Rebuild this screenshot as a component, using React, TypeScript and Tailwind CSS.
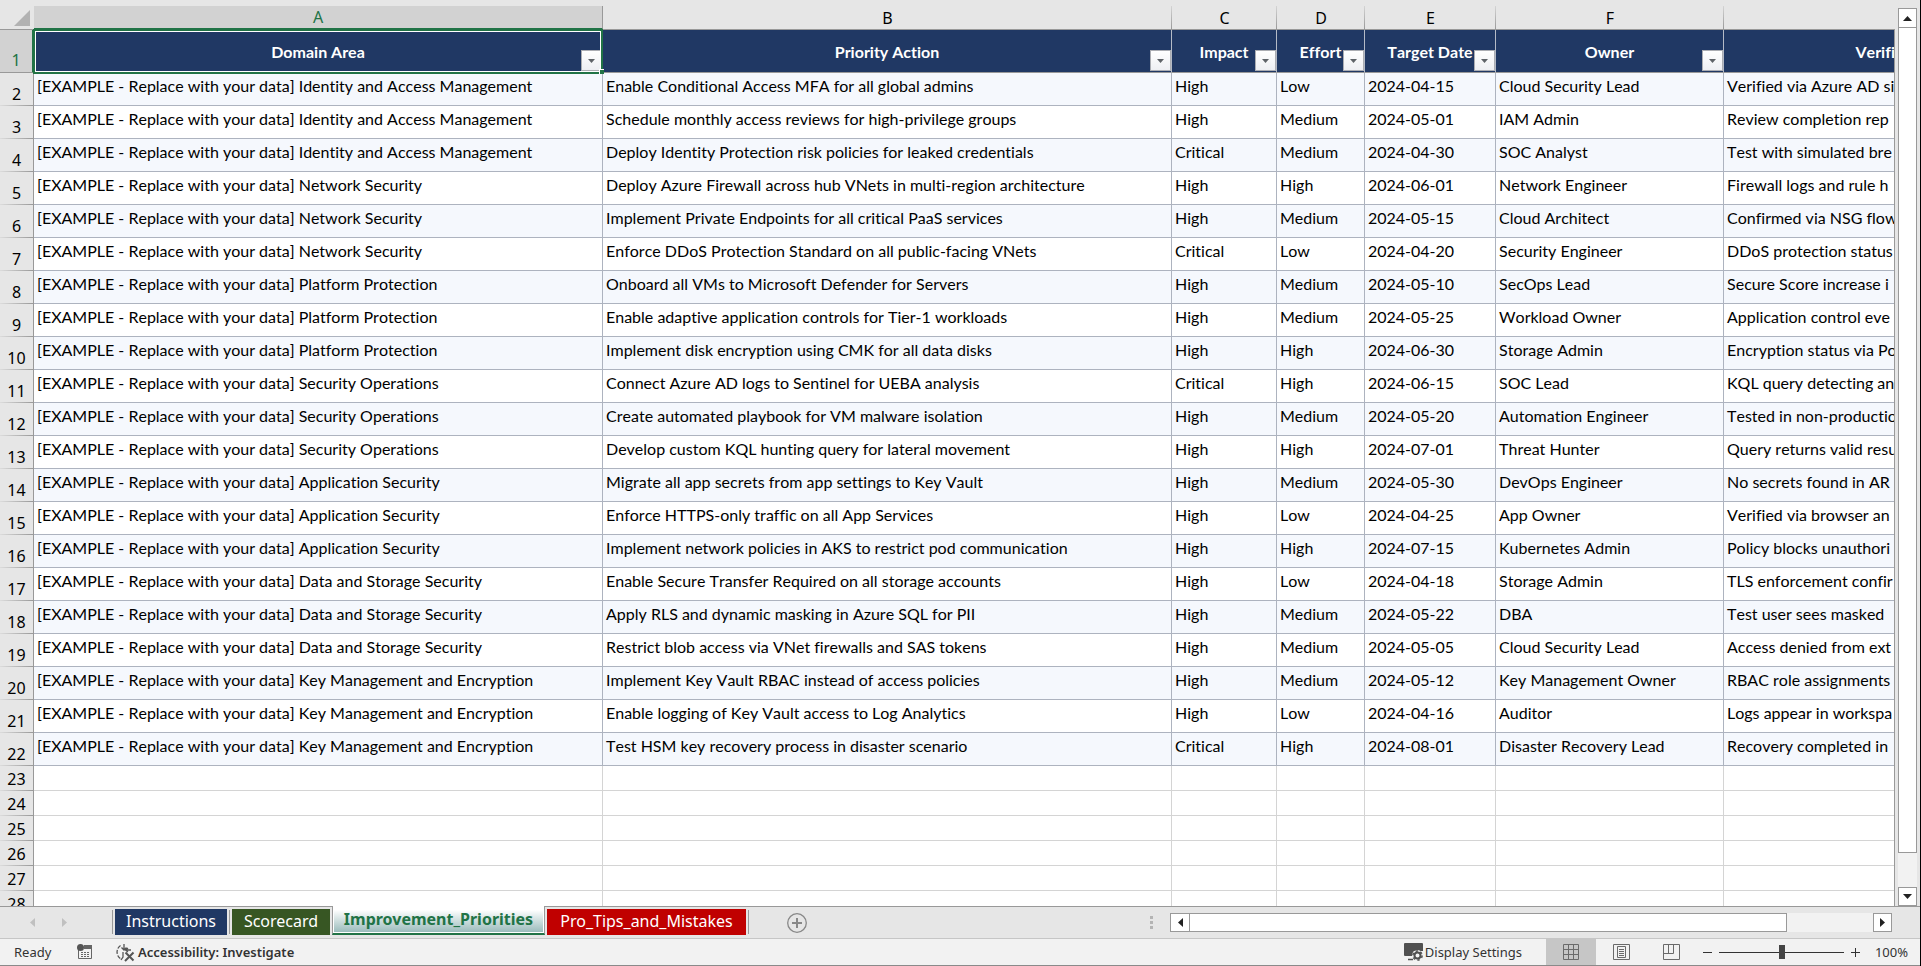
import React from "react";

type Row = [string, string, string, string, string, string, string];

const PREFIX = "[EXAMPLE - Replace with your data] ";

const columns = ["Domain Area", "Priority Action", "Impact", "Effort", "Target Date", "Owner"];
const letters = ["A", "B", "C", "D", "E", "F", ""];

const rows: Row[] = [
  ["Identity and Access Management", "Enable Conditional Access MFA for all global admins", "High", "Low", "2024-04-15", "Cloud Security Lead", "Verified via Azure AD si"],
  ["Identity and Access Management", "Schedule monthly access reviews for high-privilege groups", "High", "Medium", "2024-05-01", "IAM Admin", "Review completion rep"],
  ["Identity and Access Management", "Deploy Identity Protection risk policies for leaked credentials", "Critical", "Medium", "2024-04-30", "SOC Analyst", "Test with simulated bre"],
  ["Network Security", "Deploy Azure Firewall across hub VNets in multi-region architecture", "High", "High", "2024-06-01", "Network Engineer", "Firewall logs and rule h"],
  ["Network Security", "Implement Private Endpoints for all critical PaaS services", "High", "Medium", "2024-05-15", "Cloud Architect", "Confirmed via NSG flow"],
  ["Network Security", "Enforce DDoS Protection Standard on all public-facing VNets", "Critical", "Low", "2024-04-20", "Security Engineer", "DDoS protection status"],
  ["Platform Protection", "Onboard all VMs to Microsoft Defender for Servers", "High", "Medium", "2024-05-10", "SecOps Lead", "Secure Score increase i"],
  ["Platform Protection", "Enable adaptive application controls for Tier-1 workloads", "High", "Medium", "2024-05-25", "Workload Owner", "Application control eve"],
  ["Platform Protection", "Implement disk encryption using CMK for all data disks", "High", "High", "2024-06-30", "Storage Admin", "Encryption status via Po"],
  ["Security Operations", "Connect Azure AD logs to Sentinel for UEBA analysis", "Critical", "High", "2024-06-15", "SOC Lead", "KQL query detecting an"],
  ["Security Operations", "Create automated playbook for VM malware isolation", "High", "Medium", "2024-05-20", "Automation Engineer", "Tested in non-productio"],
  ["Security Operations", "Develop custom KQL hunting query for lateral movement", "High", "High", "2024-07-01", "Threat Hunter", "Query returns valid resu"],
  ["Application Security", "Migrate all app secrets from app settings to Key Vault", "High", "Medium", "2024-05-30", "DevOps Engineer", "No secrets found in AR"],
  ["Application Security", "Enforce HTTPS-only traffic on all App Services", "High", "Low", "2024-04-25", "App Owner", "Verified via browser an"],
  ["Application Security", "Implement network policies in AKS to restrict pod communication", "High", "High", "2024-07-15", "Kubernetes Admin", "Policy blocks unauthori"],
  ["Data and Storage Security", "Enable Secure Transfer Required on all storage accounts", "High", "Low", "2024-04-18", "Storage Admin", "TLS enforcement confir"],
  ["Data and Storage Security", "Apply RLS and dynamic masking in Azure SQL for PII", "High", "Medium", "2024-05-22", "DBA", "Test user sees masked"],
  ["Data and Storage Security", "Restrict blob access via VNet firewalls and SAS tokens", "High", "Medium", "2024-05-05", "Cloud Security Lead", "Access denied from ext"],
  ["Key Management and Encryption", "Implement Key Vault RBAC instead of access policies", "High", "Medium", "2024-05-12", "Key Management Owner", "RBAC role assignments"],
  ["Key Management and Encryption", "Enable logging of Key Vault access to Log Analytics", "High", "Low", "2024-04-16", "Auditor", "Logs appear in workspa"],
  ["Key Management and Encryption", "Test HSM key recovery process in disaster scenario", "Critical", "High", "2024-08-01", "Disaster Recovery Lead", "Recovery completed in"],
];

const emptyRows = [23, 24, 25, 26, 27, 28];

const FilterButton = ({ name }: { name: string }) => (
  <button
    aria-label={`Filter ${name}`}
    className="absolute right-0 bottom-px flex h-[21px] w-[21px] items-center justify-center border border-[#abadb3] bg-gradient-to-b from-white to-[#eeeff3]"
  >
    <svg className="h-1 w-[7px]" viewBox="0 0 7 4" fill="#5f6368">
      <path d="M0 0h7L3.5 4z" />
    </svg>
  </button>
);

const RowNumber = ({ n, active = false }: { n: number; active?: boolean }) => (
  <th
    scope="row"
    className={
      active
        ? "border-r-2 border-b border-r-[#217346] border-b-[#999] bg-[#d2d2d2] p-0 pb-0.5 align-bottom font-['Noto_Sans'] text-base leading-5 font-normal text-[#217346]"
        : "border-r border-[#999] bg-[#e6e6e6] bg-[linear-gradient(to_right,#dcdcdc,#999)] bg-[length:100%_1px] bg-bottom bg-no-repeat p-0 pb-0.5 align-bottom font-['Noto_Sans'] text-base leading-5 font-normal"
    }
  >
    {n}
  </th>
);

const Sheet = () => (
  <div className="relative min-w-0 flex-1 overflow-hidden bg-[#e6e6e6] pt-1.5 after:absolute after:top-[30px] after:right-0 after:bottom-0 after:w-px after:bg-[#999] after:content-['']">
    <table className="w-full table-fixed border-separate border-spacing-0 bg-white">
      <colgroup>
        <col className="w-[34px]" />
        <col className="w-[569px]" />
        <col className="w-[569px]" />
        <col className="w-[105px]" />
        <col className="w-[88px]" />
        <col className="w-[131px]" />
        <col className="w-[228px]" />
        <col />
      </colgroup>
      <thead>
        <tr className="h-6">
          <td className="border-b border-[#999] bg-[#e6e6e6] p-0">
            <button aria-label="Select all" className="block w-full pl-[14px]">
              <svg className="h-4 w-4" viewBox="0 0 16 16" fill="#b2b2b2">
                <path d="M16 0v16H0z" />
              </svg>
            </button>
          </td>
          {letters.map((letter, i) => (
            <th
              key={letter}
              scope="col"
              className={
                i === 0
                  ? "border-r border-b-2 border-r-[#999] border-b-[#217346] bg-[#d2d2d2] p-0 font-['Noto_Sans'] text-base leading-5 font-normal text-[#217346]"
                  : "border-b border-[#999] bg-[#e6e6e6] bg-[linear-gradient(to_bottom,#d4d4d4,#999)] bg-[length:1px_100%] bg-right bg-no-repeat p-0 font-['Noto_Sans'] text-base leading-5 font-normal last:bg-none"
              }
            >
              {letter}
            </th>
          ))}
        </tr>
        <tr className="h-[43px]">
          <RowNumber n={1} active />
          {columns.map((name, i) => (
            <th
              key={name}
              scope="col"
              className="relative border-r border-b border-r-[#b4bac6] border-b-[#999] bg-[#203864] p-0 pt-0.5 text-center leading-5 font-bold whitespace-nowrap text-white"
            >
              {name}
              <FilterButton name={name} />
              {i === 0 && (
                <span className="pointer-events-none absolute -inset-x-px -top-px -bottom-[2px] z-10 border-2 border-[#217346]">
                  <span className="absolute inset-0 border border-white" />
                  <span className="absolute -right-[3px] -bottom-[2px] h-[5px] w-[5px] border-t border-l border-white bg-[#217346]" />
                </span>
              )}
            </th>
          ))}
          <th
            scope="col"
            className="border-b border-[#999] bg-[#203864] p-0 pt-0.5 text-right leading-5 font-bold text-white"
          >
            Verifi
          </th>
        </tr>
      </thead>
      <tbody>
        {rows.map((row, r) => (
          <tr key={r} className={r % 2 === 0 ? "h-[33px] bg-[#f5f8fd]" : "h-[33px]"}>
            <RowNumber n={r + 2} />
            {row.map((cell, c) => (
              <td
                key={c}
                className="overflow-hidden border-r border-b border-[#adb3bf] p-0 pb-1.5 pl-[3px] leading-5 whitespace-nowrap"
              >
                {c === 0 ? PREFIX + cell : cell}
              </td>
            ))}
          </tr>
        ))}
        {emptyRows.map((n) => (
          <tr key={n} className="h-[25px]">
            <RowNumber n={n} />
            {letters.map((letter) => (
              <td key={letter} className="border-r border-b border-[#d4d4d4] p-0" />
            ))}
          </tr>
        ))}
      </tbody>
    </table>
  </div>
);

const VerticalScroll = () => (
  <div className="mr-[3px] ml-[3px] flex w-[19px] shrink-0 flex-col bg-[#f2f2f2]">
    <div className="h-2 bg-[#e6e6e6]" />
    <button aria-label="Scroll up" className="flex h-5 items-center justify-center border border-[#999] bg-white">
      <svg className="h-[5px] w-[9px]" viewBox="0 0 9 5" fill="#222">
        <path d="M0 5h9L4.5 0z" />
      </svg>
    </button>
    <div className="-mt-px flex-[826] border border-[#999] bg-white" />
    <div className="flex-[34]" />
    <button aria-label="Scroll down" className="flex h-[19px] items-center justify-center border border-[#999] bg-white">
      <svg className="h-[5px] w-[9px]" viewBox="0 0 9 5" fill="#222">
        <path d="M0 0h9L4.5 5z" />
      </svg>
    </button>
  </div>
);

const TabBar = () => (
  <div className="flex h-8 shrink-0 items-start text-base leading-6">
    <div className="flex h-full w-28 items-center gap-[27px] border-t border-[#999] pl-[30px]">
      <button aria-label="Previous sheet">
        <svg className="h-[9px] w-[5px]" viewBox="0 0 5 9" fill="#c0c0c0">
          <path d="M5 0v9L0 4.500z" />
        </svg>
      </button>
      <button aria-label="Next sheet">
        <svg className="h-[9px] w-[5px]" viewBox="0 0 5 9" fill="#c0c0c0">
          <path d="M0 0v9l5-4.500z" />
        </svg>
      </button>
    </div>
    <div className="flex h-full gap-[2px] border-t border-[#999] pt-[2px] pr-[2px]">
      <span className="mt-px h-6 w-px bg-[#999]" />
      <button className="h-[26px] w-28 bg-[#203864] pb-1 text-white">Instructions</button>
      <span className="mt-px h-6 w-px bg-[#999]" />
      <button className="h-[26px] w-[98px] bg-[#375623] pb-1 text-white">Scorecard</button>
    </div>
    <button className="h-[29px] w-[213px] border-x border-b-2 border-x-[#999] border-b-[#217346] bg-white px-px pb-px">
      <span className="flex h-full items-center justify-center bg-gradient-to-b from-white from-15% to-[#9bbcbc] pb-px font-bold text-[#217346]">
        Improvement_Priorities
      </span>
    </button>
    <div className="flex h-full min-w-0 flex-1 border-t border-[#999] pt-[2px] pl-[2px]">
      <button className="h-[26px] w-[199px] bg-[#c00000] pb-1 text-white">Pro_Tips_and_Mistakes</button>
      <span className="mt-px ml-[2px] h-6 w-px bg-[#999]" />
      <button aria-label="New sheet" className="mt-1 ml-[38px] h-5">
        <svg className="h-5 w-5" viewBox="0 0 20 20" fill="none" stroke="#888">
          <circle cx="10" cy="10" r="9.300" strokeWidth="1.300" />
          <path d="M10 5v10M5 10h10" strokeWidth="2" />
        </svg>
      </button>
      <div className="mt-[7px] ml-auto flex flex-col gap-[2px]">
        <i className="h-[3px] w-[3px] bg-[#b4b4b4]" />
        <i className="h-[3px] w-[3px] bg-[#b4b4b4]" />
        <i className="h-[3px] w-[3px] bg-[#b4b4b4]" />
      </div>
      <div className="mt-1 mr-7 ml-[17px] flex h-[19px] w-[722px] bg-[#f2f2f2]">
        <button aria-label="Scroll left" className="flex w-5 items-center justify-center border border-[#999] bg-white">
          <svg className="h-[9px] w-[5px]" viewBox="0 0 5 9" fill="#222">
            <path d="M5 0v9L0 4.500z" />
          </svg>
        </button>
        <div className="-ml-px w-[598px] border border-[#999] bg-white" />
        <button
          aria-label="Scroll right"
          className="ml-auto flex w-[19px] items-center justify-center border border-[#999] bg-white"
        >
          <svg className="h-[9px] w-[5px]" viewBox="0 0 5 9" fill="#222">
            <path d="M0 0v9l5-4.500z" />
          </svg>
        </button>
      </div>
    </div>
  </div>
);

const StatusBar = () => (
  <footer className="flex h-7 shrink-0 items-center border-t border-b border-t-[#c6c6c6] border-b-[#8a8a8a] bg-[#f2f2f2] text-[13px] leading-5 text-[#333]">
    <span className="w-[77px] pl-[14px]">Ready</span>
    <button aria-label="Macro recording">
      <svg className="h-4 w-4" viewBox="0 0 16 16">
        <path d="M1.500 6v8.500h13V1.500H7" fill="none" stroke="#666" />
        <path d="M7 1h8v4H7z" fill="#666" />
        <circle cx="3.500" cy="3.500" r="3.500" fill="#555" />
        <path d="M4 8.500h9M4 10.500h9M4 12.500h9" stroke="#666" strokeDasharray="2 1" />
      </svg>
    </button>
    <button className="ml-[22px] flex items-center gap-[3px] font-semibold">
      <svg className="h-[19px] w-5" viewBox="0 0 20 19" fill="none" stroke="#555" strokeWidth="1.300">
        <path d="M5.500 2.500A8 8 0 0 0 6 16" strokeDasharray="4 1.500" />
        <path d="M9 1v6M6.500 4.500L9 7l2.500-2.500M16 7h-5M13 5l-2.500 2L13 9M8 9v5l-2 3" />
        <path d="M10.500 9.500l8 8M18.500 9.500l-8.500 8.500" strokeWidth="2" />
      </svg>
      Accessibility: Investigate
    </button>
    <button className="ml-auto flex items-center gap-[2px]">
      <svg className="h-[18px] w-[19px]" viewBox="0 0 19 18">
        <path d="M1 0h17a1 1 0 0 1 1 1v7h-9l-2 5H1a1 1 0 0 1-1-1V1a1 1 0 0 1 1-1z" fill="#505050" />
        <path d="M4 16.500h5" stroke="#505050" strokeWidth="1.500" />
        <circle cx="13.500" cy="12.500" r="5.500" fill="#f2f2f2" />
        <circle cx="13.500" cy="12.500" r="3" fill="none" stroke="#505050" strokeWidth="2" />
        <circle cx="13.500" cy="12.500" r="4.600" fill="none" stroke="#505050" strokeWidth="1.500" strokeDasharray="2.400 2.400" />
      </svg>
      Display Settings
    </button>
    <div className="ml-6 flex h-full">
      <button aria-label="Normal view" className="flex w-[50px] items-center justify-center bg-[#c6c6c6]">
        <svg className="h-4 w-4" viewBox="0 0 16 16" fill="none" stroke="#6a6a6a">
          <path d="M.5.5h15v15H.5zM5.500.500v15M10.500.500v15M.5 5.500h15M.5 10.500h15" />
        </svg>
      </button>
      <button aria-label="Page layout" className="flex w-[50px] items-center justify-center">
        <svg className="h-4 w-[17px]" viewBox="0 0 17 16" fill="none" stroke="#6a6a6a">
          <path d="M.5.5h16v15H.5zM4.500 2.500h8v11h-8zM6 5.500h5M6 7.500h5M6 9.500h5M6 11.500h5" />
        </svg>
      </button>
      <button aria-label="Page break preview" className="flex w-[50px] items-center justify-center">
        <svg className="h-4 w-[17px]" viewBox="0 0 17 16" fill="none" stroke="#6a6a6a">
          <path d="M.5.5h16v15H.5zM.5 9.500h10v-9M5.500.500v9" />
        </svg>
      </button>
    </div>
    <button aria-label="Zoom out" className="ml-[7px]">
      <svg className="h-[9px] w-[9px]" viewBox="0 0 9 9" stroke="#333">
        <path d="M0 4.500h9" />
      </svg>
    </button>
    <input
      type="range"
      aria-label="Zoom"
      min={10}
      max={190}
      defaultValue={100}
      className="mx-[7px] h-[14px] w-[125px] appearance-none bg-[linear-gradient(#333,#333)] bg-[length:100%_1px] bg-center bg-no-repeat [&::-webkit-slider-thumb]:h-[14px] [&::-webkit-slider-thumb]:w-1.5 [&::-webkit-slider-thumb]:appearance-none [&::-webkit-slider-thumb]:bg-[#444]"
    />
    <button aria-label="Zoom in">
      <svg className="h-[9px] w-[9px]" viewBox="0 0 9 9" stroke="#333">
        <path d="M0 4.500h9M4.500 0v9" />
      </svg>
    </button>
    <span className="w-[60px] pr-3 text-right">100%</span>
  </footer>
);

export default function App() {
  return (
    <div className="flex h-screen flex-col overflow-hidden border-r border-black bg-[#e6e6e6] font-['Noto_Sans',sans-serif] text-black">
      <main className="flex min-h-0 flex-1 font-['Lato',sans-serif] text-base [font-kerning:none] [font-variant-ligatures:none]">
        <Sheet />
        <VerticalScroll />
      </main>
      <TabBar />
      <StatusBar />
    </div>
  );
}
